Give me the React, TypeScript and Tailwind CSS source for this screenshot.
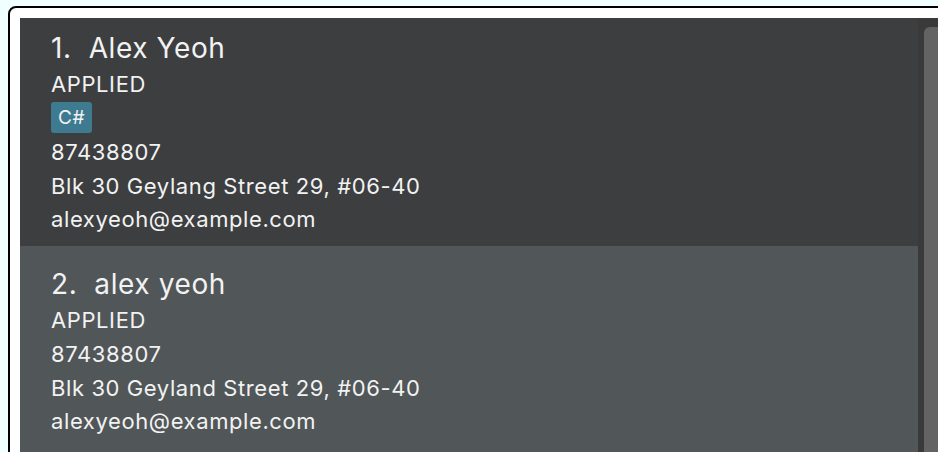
const persons = [
  {
    id: 1,
    name: "Alex Yeoh",
    status: "APPLIED",
    tags: ["C#"],
    phone: "87438807",
    address: "Blk 30 Geylang Street 29, #06-40",
    email: "alexyeoh@example.com",
  },
  {
    id: 2,
    name: "alex yeoh",
    status: "APPLIED",
    tags: [] as string[],
    phone: "87438807",
    address: "Blk 30 Geyland Street 29, #06-40",
    email: "alexyeoh@example.com",
  },
]

function PersonCard({ p, index }: { p: (typeof persons)[number]; index: number }) {
  const bg = index % 2 === 0 ? "bg-[#3c3e40]" : "bg-[#515658] flex-1"
  return (
    <div className={`${bg} pl-[31px] pt-[18px] pb-[10px] text-[#f2f2f2] flex flex-col tracking-[0.6px]`}>
      <div className="text-[28px] leading-[40px]">
        {p.id}.&nbsp; {p.name}
      </div>
      <div className="text-[22px] leading-[33px]">{p.status}</div>
      {p.tags.length > 0 && (
        <div className="flex gap-1 pt-[1px] pb-[2px]">
          {p.tags.map((t) => (
            <span key={t} className="bg-[#3e7b91] rounded-[3px] px-[7px] text-[19px] leading-[31px]">
              {t}
            </span>
          ))}
        </div>
      )}
      <div className="text-[22px] leading-[34px]">{p.phone}</div>
      <div className="text-[22px] leading-[34px]">{p.address}</div>
      <div className="text-[22px] leading-[33px]">{p.email}</div>
    </div>
  )
}

export default function App() {
  return (
    <div className="h-[452px] w-[938px] overflow-hidden bg-[#f0ffff] pl-[8px] pt-[6px]" style={{ fontFamily: "Inter, Roboto, sans-serif" }}>
      <div className="w-[960px] h-[500px] border-2 border-black rounded-tl-lg bg-white pl-[10px] pt-[10px]">
        <div className="flex h-full">
          <div className="w-[898px] overflow-hidden flex flex-col">
            <div className="-mt-[8px] flex flex-col flex-1">
              {persons.map((p, i) => (
                <PersonCard key={p.id} p={p} index={i} />
              ))}
            </div>
          </div>
          <div className="w-[20px] bg-[#3a3a3a] pl-[6px] pt-[9px] flex">
            <div className="flex-1 bg-[#636363] rounded-tl-[6px]" />
          </div>
        </div>
      </div>
    </div>
  )
}
